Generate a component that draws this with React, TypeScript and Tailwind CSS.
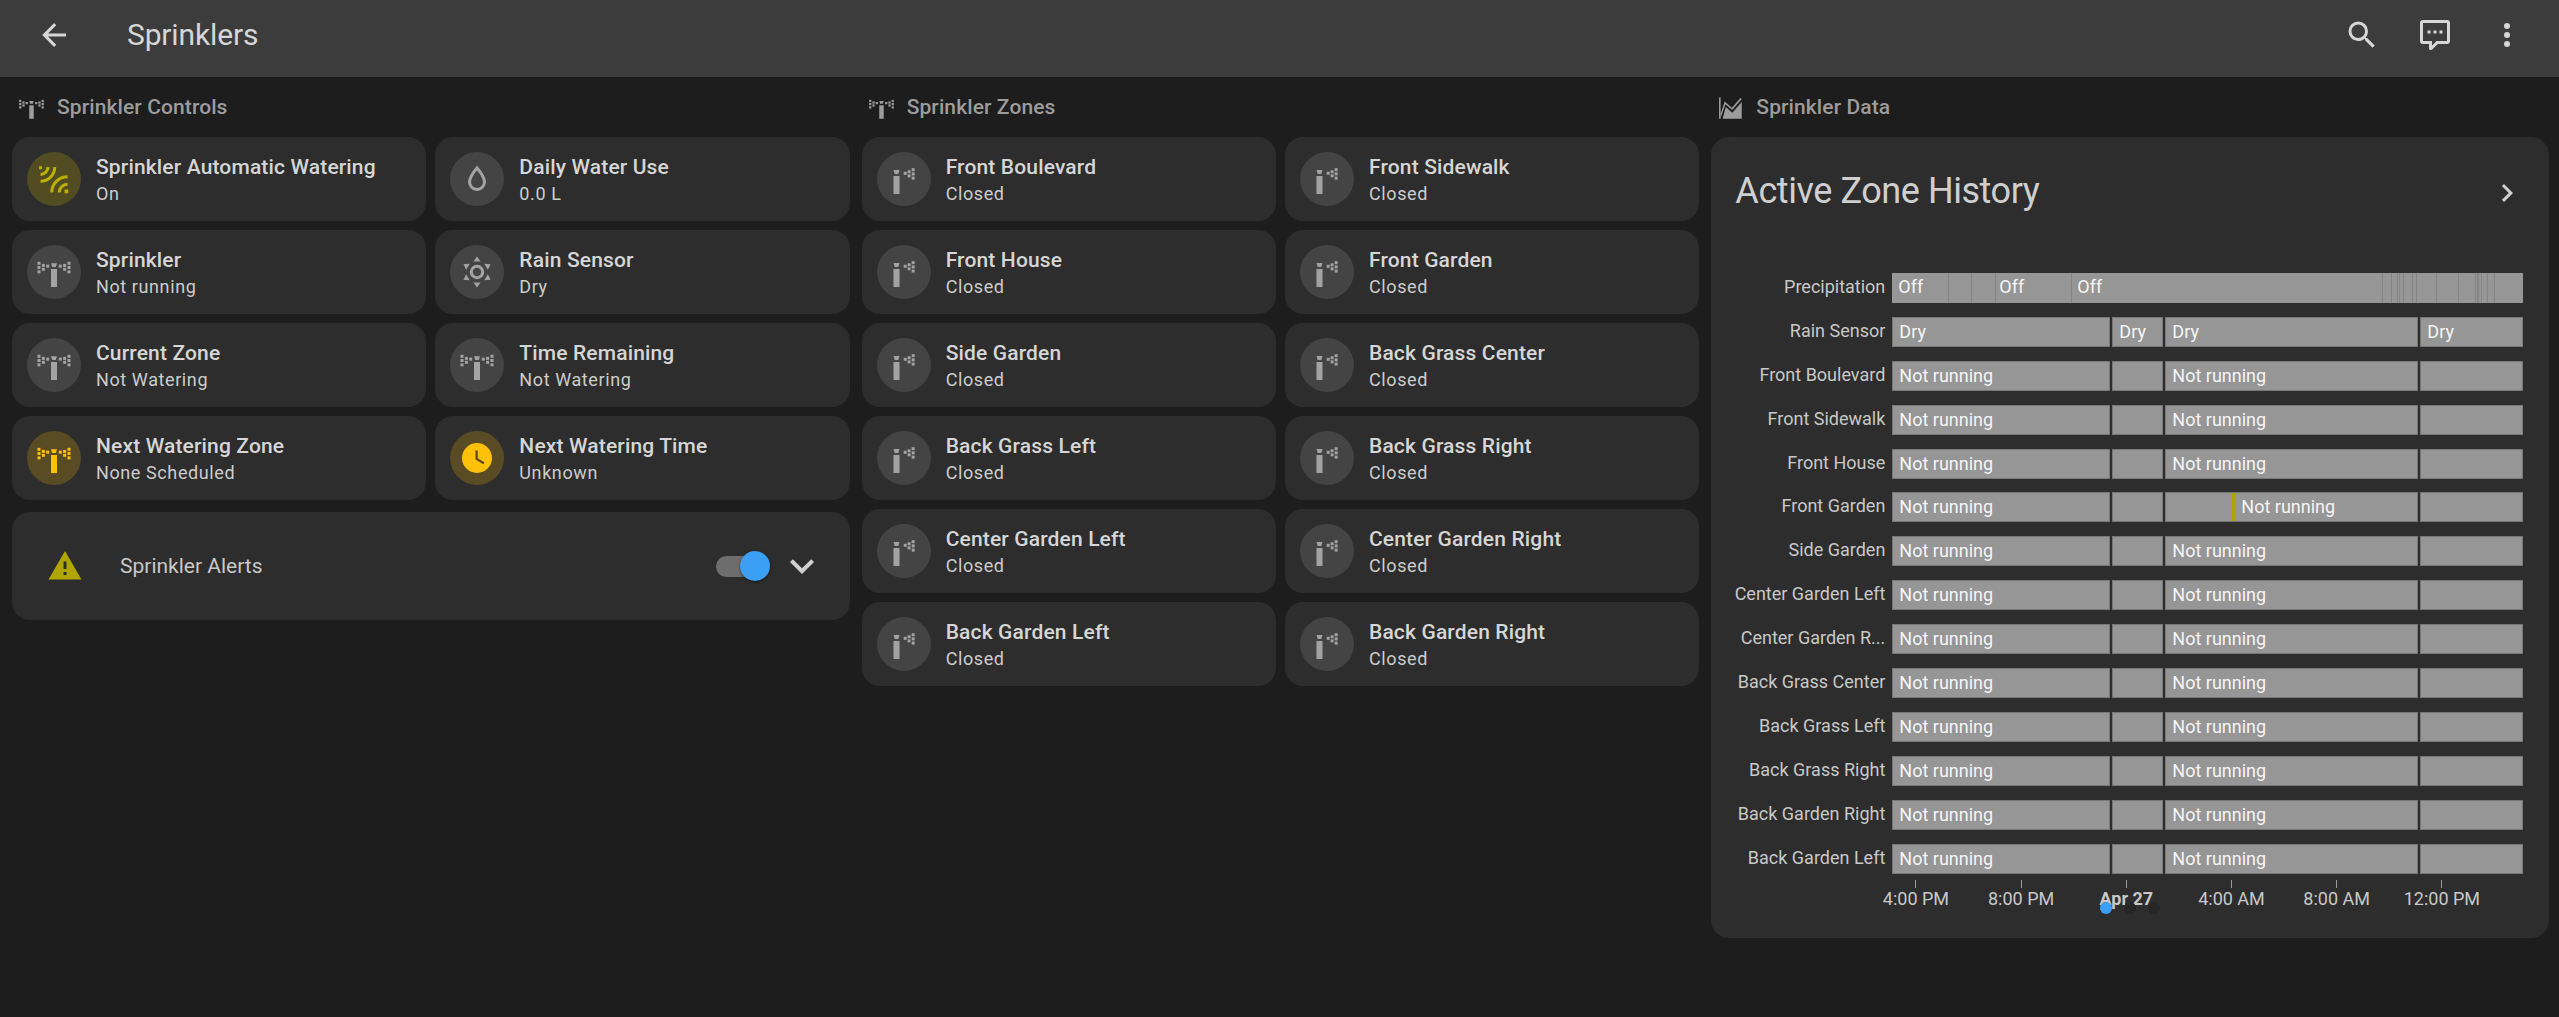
const arrowLeft = "M20,11V13H8L13.5,18.5L12.08,19.92L4.16,12L12.08,4.08L13.5,5.5L8,11H20Z"
const magnify = "M9.5,3A6.5,6.5 0 0,1 16,9.5C16,11.11 15.41,12.59 14.44,13.73L14.71,14H15.5L20.5,19L19,20.5L14,15.5V14.71L13.73,14.44C12.59,15.41 11.11,16 9.5,16A6.5,6.5 0 0,1 3,9.5A6.5,6.5 0 0,1 9.5,3M9.5,5C7,5 5,7 5,9.5C5,12 7,14 9.5,14C12,14 14,12 14,9.5C14,7 12,5 9.5,5Z"
const comment = "M9,22A1,1 0 0,1 8,21V18H4A2,2 0 0,1 2,16V4C2,2.89 2.9,2 4,2H20A2,2 0 0,1 22,4V16A2,2 0 0,1 20,18H13.9L10.2,21.71C10,21.9 9.75,22 9.5,22V22H9M10,16V19.08L13.08,16H20V4H4V16H10M17,11V9H15V11H17M13,11V9H11V11H13M9,11V9H7V11H9Z"
const dotsVertical = "M12,16A2,2 0 0,1 14,18A2,2 0 0,1 12,20A2,2 0 0,1 10,18A2,2 0 0,1 12,16M12,10A2,2 0 0,1 14,12A2,2 0 0,1 12,14A2,2 0 0,1 10,12A2,2 0 0,1 12,10M12,4A2,2 0 0,1 14,6A2,2 0 0,1 12,8A2,2 0 0,1 10,6A2,2 0 0,1 12,4Z"
const chevronDown = "M7.41,8.58L12,13.17L16.59,8.58L18,10L12,16L6,10L7.41,8.58Z"
const chevronRight = "M8.59,16.58L13.17,12L8.59,7.41L10,6L16,12L10,18L8.59,16.58Z"
const alert = "M13 14H11V9H13M13 18H11V16H13M1 21H23L12 2L1 21Z"
const clock = "M12,2A10,10 0 0,0 2,12A10,10 0 0,0 12,22A10,10 0 0,0 22,12A10,10 0 0,0 12,2M16.2,16.2L11,13V7H12.5V12.2L17,14.9L16.2,16.2Z"

type IconProps = { className?: string }

function Mdi({ d, className }: IconProps & { d: string }) {
    return (
        <svg viewBox="0 0 24 24" fill="currentColor" className={className}>
            <path d={d} />
        </svg>
    )
}

function SprinklerIcon({ className }: IconProps) {
    const drops = [
        [1, 5.2], [1, 8], [1, 10.9], [3.9, 6.6], [3.9, 9.2], [6.8, 7.1],
        [21, 5.2], [21, 8], [21, 10.9], [18.1, 6.6], [18.1, 9.2], [15.2, 7.1],
    ]
    return (
        <svg viewBox="0 0 24 24" fill="currentColor" className={className}>
            {drops.map(([x, y]) => <rect key={`${x}-${y}`} x={x} y={y} width="2" height="2" />)}
            <path d="M10 6.2H14L13.2 8.7H10.8Z" />
            <rect x="10" y="10" width="4" height="12" />
        </svg>
    )
}

function SprinklerVariantIcon({ className }: IconProps) {
    const drops = [[17.1, 4.8], [17.1, 7.6], [17.1, 10.4], [14.4, 6.2], [14.4, 8.9], [11.8, 7.2]]
    return (
        <svg viewBox="0 0 24 24" fill="currentColor" className={className}>
            {drops.map(([x, y]) => <rect key={`${x}-${y}`} x={x} y={y} width="2" height="2" />)}
            <path d="M5 6H9L8.2 8.6H5.8Z" />
            <rect x="5" y="10" width="4" height="12" />
        </svg>
    )
}

function AutoWateringIcon({ className }: IconProps) {
    return (
        <svg viewBox="0 0 24 24" fill="none" stroke="currentColor" strokeWidth="2" className={className}>
            <path d="M3 13.5A9.5 9.5 0 0 0 12.5 4" />
            <path d="M3 9A5 5 0 0 0 8 4" />
            <path d="M10.5 21A10.5 10.5 0 0 1 21 10.5" />
            <path d="M15.5 21A5.5 5.5 0 0 1 21 15.5" />
            <rect x="2" y="3.5" width="2" height="2" fill="currentColor" stroke="none" />
            <rect x="19" y="19" width="2.5" height="2.5" fill="currentColor" stroke="none" />
        </svg>
    )
}

function WaterIcon({ className }: IconProps) {
    return (
        <svg viewBox="0 0 24 24" fill="none" stroke="currentColor" strokeWidth="2" className={className}>
            <path d="M12 4.6C12 4.6 7 10.4 7 14A5 5 0 0 0 17 14C17 10.4 12 4.6 12 4.6Z" />
        </svg>
    )
}

function RainSensorIcon({ className }: IconProps) {
    return (
        <svg viewBox="0 0 24 24" fill="currentColor" className={className}>
            <circle cx="12" cy="12" r="3.8" fill="none" stroke="currentColor" strokeWidth="2" />
            {[0, 60, 120, 180, 240, 300].map(angle => (
                <polygon key={angle} points="12,1.6 14.4,5 9.6,5" transform={`rotate(${angle} 12 12)`} />
            ))}
        </svg>
    )
}

function ChartIcon({ className }: IconProps) {
    return (
        <svg viewBox="0 0 24 24" fill="currentColor" className={className}>
            <rect x="1.8" y="3" width="1.4" height="19" />
            <path d="M3.2 18L6.8 6.6L13.3 12.2L21 3.4L22 4.4L13.5 14.2L7.5 9L3.2 21Z" />
            <path d="M5 22L7.8 11.5L13.6 16.6L22 7V22Z" />
        </svg>
    )
}

type Tile = { name: string; state: string; icon: React.ReactNode; tone?: 'gray' | 'olive' | 'amber' }

const grayIcon = 'size-9 text-[#a3a3a3]'

const controls: Tile[] = [
    { name: 'Sprinkler Automatic Watering', state: 'On', icon: <AutoWateringIcon className="size-9 text-[#bdb000]" />, tone: 'olive' },
    { name: 'Daily Water Use', state: '0.0 L', icon: <WaterIcon className={grayIcon} /> },
    { name: 'Sprinkler', state: 'Not running', icon: <SprinklerIcon className={grayIcon} /> },
    { name: 'Rain Sensor', state: 'Dry', icon: <RainSensorIcon className={grayIcon} /> },
    { name: 'Current Zone', state: 'Not Watering', icon: <SprinklerIcon className={grayIcon} /> },
    { name: 'Time Remaining', state: 'Not Watering', icon: <SprinklerIcon className={grayIcon} /> },
    { name: 'Next Watering Zone', state: 'None Scheduled', icon: <SprinklerIcon className="size-9 text-[#ffc107]" />, tone: 'amber' },
    { name: 'Next Watering Time', state: 'Unknown', icon: <Mdi d={clock} className="size-9 text-[#ffc107]" />, tone: 'amber' },
]

const zones = [
    'Front Boulevard', 'Front Sidewalk', 'Front House', 'Front Garden', 'Side Garden', 'Back Grass Center',
    'Back Grass Left', 'Back Grass Right', 'Center Garden Left', 'Center Garden Right', 'Back Garden Left', 'Back Garden Right',
]

const historyRows = [
    'Front Boulevard', 'Front Sidewalk', 'Front House', 'Front Garden', 'Side Garden', 'Center Garden Left', 'Center Garden R...',
    'Back Grass Center', 'Back Grass Left', 'Back Grass Right', 'Back Garden Right', 'Back Garden Left',
]

// thin state changes in the precipitation bar, in px from its left edge
const precipitationMarks = [56, 79, 103, 179, 490, 499, 505, 506.5, 511, 520, 524, 544, 566, 583, 584.5, 586, 589, 595, 602]

const axisLabels = ['4:00 PM', '8:00 PM', 'Apr 27', '4:00 AM', '8:00 AM', '12:00 PM']

function TileCard({ name, state, icon, tone = 'gray' }: Tile) {
    const circle = tone === 'olive' ? 'bg-[#514c22]' : tone === 'amber' ? 'bg-[#594c24]' : 'bg-[#444444]'
    return (
        <div className="flex h-[84px] items-center gap-[15px] rounded-[18px] bg-[#2d2d2d] pl-[15px]">
            <div className={`flex size-[54px] shrink-0 items-center justify-center rounded-full ${circle}`}>
                {icon}
            </div>
            <div className="min-w-0">
                <div className="truncate text-[21px] leading-[30px] font-medium tracking-[0.15px] text-[#d6d6d6]">{name}</div>
                <div className="truncate text-[18px] leading-[24px] tracking-[0.6px] text-[#cccccc]">{state}</div>
            </div>
        </div>
    )
}

function SectionHeading({ icon, title }: { icon: React.ReactNode; title: string }) {
    return (
        <div className="flex h-[60px] items-center gap-[12px] pl-[6px] text-[#9c9c9c]">
            {icon}
            <span className="pt-px text-[21px] font-medium tracking-[0.1px]">{title}</span>
        </div>
    )
}

const segment = 'h-full border border-[#777777] bg-[#969696] text-[18px] leading-[27px] text-[#f5f5f5]'

function Segments({ first, third, last }: { first?: string; third?: string; last?: string }) {
    return (
        <div className="flex h-full w-[631px] gap-[2px]">
            <div className={`${segment} w-[218px] pl-[6px]`}>{first}</div>
            <div className={`${segment} w-[51px] pl-[6px]`}>{last}</div>
            <div className={`${segment} w-[253px] pl-[6px]`}>{third}</div>
            <div className={`${segment} flex-1 pl-[6px]`}>{last}</div>
        </div>
    )
}

function RowLabel({ children }: { children: string }) {
    return <div className="mr-[7px] w-[174px] shrink-0 text-right text-[18px] leading-[27px] text-[#c8c8c8]">{children}</div>
}

function HistoryChart() {
    return (
        <div className="mt-[58px] flex flex-col gap-[13.9px]">
            <div className="flex h-[30px]">
                <RowLabel>Precipitation</RowLabel>
                <div className="relative h-full w-[631px] bg-[#969696] pl-[6px] text-[18px] leading-[27px] text-[#f5f5f5]">
                    <span>Off</span>
                    <span className="absolute top-0 left-[107px]">Off</span>
                    <span className="absolute top-0 left-[185px]">Off</span>
                    {precipitationMarks.map(left => (
                        <span key={left} className="absolute top-0 h-full w-px bg-[#858585]" style={{ left }} />
                    ))}
                </div>
            </div>
            <div className="flex h-[30px]">
                <RowLabel>Rain Sensor</RowLabel>
                <Segments first="Dry" third="Dry" last="Dry" />
            </div>
            {historyRows.map(row => (
                <div key={row} className="flex h-[30px]">
                    <RowLabel>{row}</RowLabel>
                    {row === 'Front Garden' ? (
                        <div className="flex h-full w-[631px] gap-[2px]">
                            <div className={`${segment} w-[218px] pl-[6px]`}>Not running</div>
                            <div className={`${segment} w-[51px]`} />
                            <div className={`${segment} flex w-[253px]`}>
                                <div className="w-[65px]" />
                                <div className="h-full w-[4px] bg-[#b0a400]" />
                                <div className="pl-[6px]">Not running</div>
                            </div>
                            <div className={`${segment} flex-1`} />
                        </div>
                    ) : (
                        <Segments first="Not running" third="Not running" />
                    )}
                </div>
            ))}
        </div>
    )
}

function TimeAxis() {
    return (
        <div className="relative mt-[6px] ml-[152px] flex">
            {axisLabels.map(label => (
                <div key={label} className="flex w-[105.2px] flex-col items-center">
                    <div className="h-[8px] w-px bg-[#9a9a9a]" />
                    <div className={`text-[18px] leading-[22px] text-[#c8c8c8] ${label === 'Apr 27' ? 'font-bold' : ''}`}>{label}</div>
                </div>
            ))}
            <div className="absolute top-[22px] left-[237px] flex gap-[12px]">
                <span className="size-[12px] rounded-full bg-[#3a9ff5]" />
                <span className="size-[12px] rounded-full bg-[#262626]" />
                <span className="size-[12px] rounded-full bg-[#262626]" />
            </div>
        </div>
    )
}

export default function App() {
    return (
        <div className="min-h-screen bg-[#1d1d1d] font-[family-name:Roboto,sans-serif]">
            <header className="flex h-[77px] items-start bg-[#3c3c3c] pt-[17px] pr-[34px] pl-[36px] text-[#d6d6d6]">
                <Mdi d={arrowLeft} className="size-9" />
                <h1 className="ml-[55px] flex-1 text-[30px] leading-[36px] tracking-[-0.15px]">Sprinklers</h1>
                <div className="flex gap-[36.5px]">
                    <Mdi d={magnify} className="size-9" />
                    <Mdi d={comment} className="size-9" />
                    <Mdi d={dotsVertical} className="size-9" />
                </div>
            </header>

            <main className="grid grid-cols-3 gap-x-[12px] pr-[10px] pl-[12px]">
                <section>
                    <SectionHeading icon={<SprinklerIcon className="size-[27px]" />} title="Sprinkler Controls" />
                    <div className="grid grid-cols-2 gap-[9px]">
                        {controls.map(tile => <TileCard key={tile.name} {...tile} />)}
                    </div>
                    <div className="mt-[12px] flex h-[108px] items-center rounded-[18px] bg-[#2d2d2d] pr-[24px] pl-[35px]">
                        <Mdi d={alert} className="size-9 text-[#b1a600]" />
                        <span className="ml-[37px] flex-1 pt-[2px] text-[21px] text-[#c8c8c8]">Sprinkler Alerts</span>
                        <div className="relative h-[21px] w-[46px] rounded-full bg-[#6d6d6d]">
                            <span className="absolute top-[-5px] left-[24px] size-[30px] rounded-full bg-[#3a9ff5] shadow-[0_1px_3px_rgba(0,0,0,0.5)]" />
                        </div>
                        <Mdi d={chevronDown} className="ml-[16px] size-12 text-[#d0d0d0]" />
                    </div>
                </section>

                <section>
                    <SectionHeading icon={<SprinklerIcon className="size-[27px]" />} title="Sprinkler Zones" />
                    <div className="grid grid-cols-2 gap-[9px]">
                        {zones.map(zone => (
                            <TileCard key={zone} name={zone} state="Closed" icon={<SprinklerVariantIcon className={grayIcon} />} />
                        ))}
                    </div>
                </section>

                <section>
                    <SectionHeading icon={<ChartIcon className="size-[27px]" />} title="Sprinkler Data" />
                    <div className="h-[801px] rounded-[18px] bg-[#2d2d2d] pt-[30px]">
                        <div className="flex items-center justify-between pr-[24px] pl-[24px] text-[#cfcfcf]">
                            <h2 className="text-[36px] leading-[48px] tracking-[-0.43px]">Active Zone History</h2>
                            <Mdi d={chevronRight} className="mt-[4px] size-9" />
                        </div>
                        <HistoryChart />
                        <TimeAxis />
                    </div>
                </section>
            </main>
        </div>
    )
}
